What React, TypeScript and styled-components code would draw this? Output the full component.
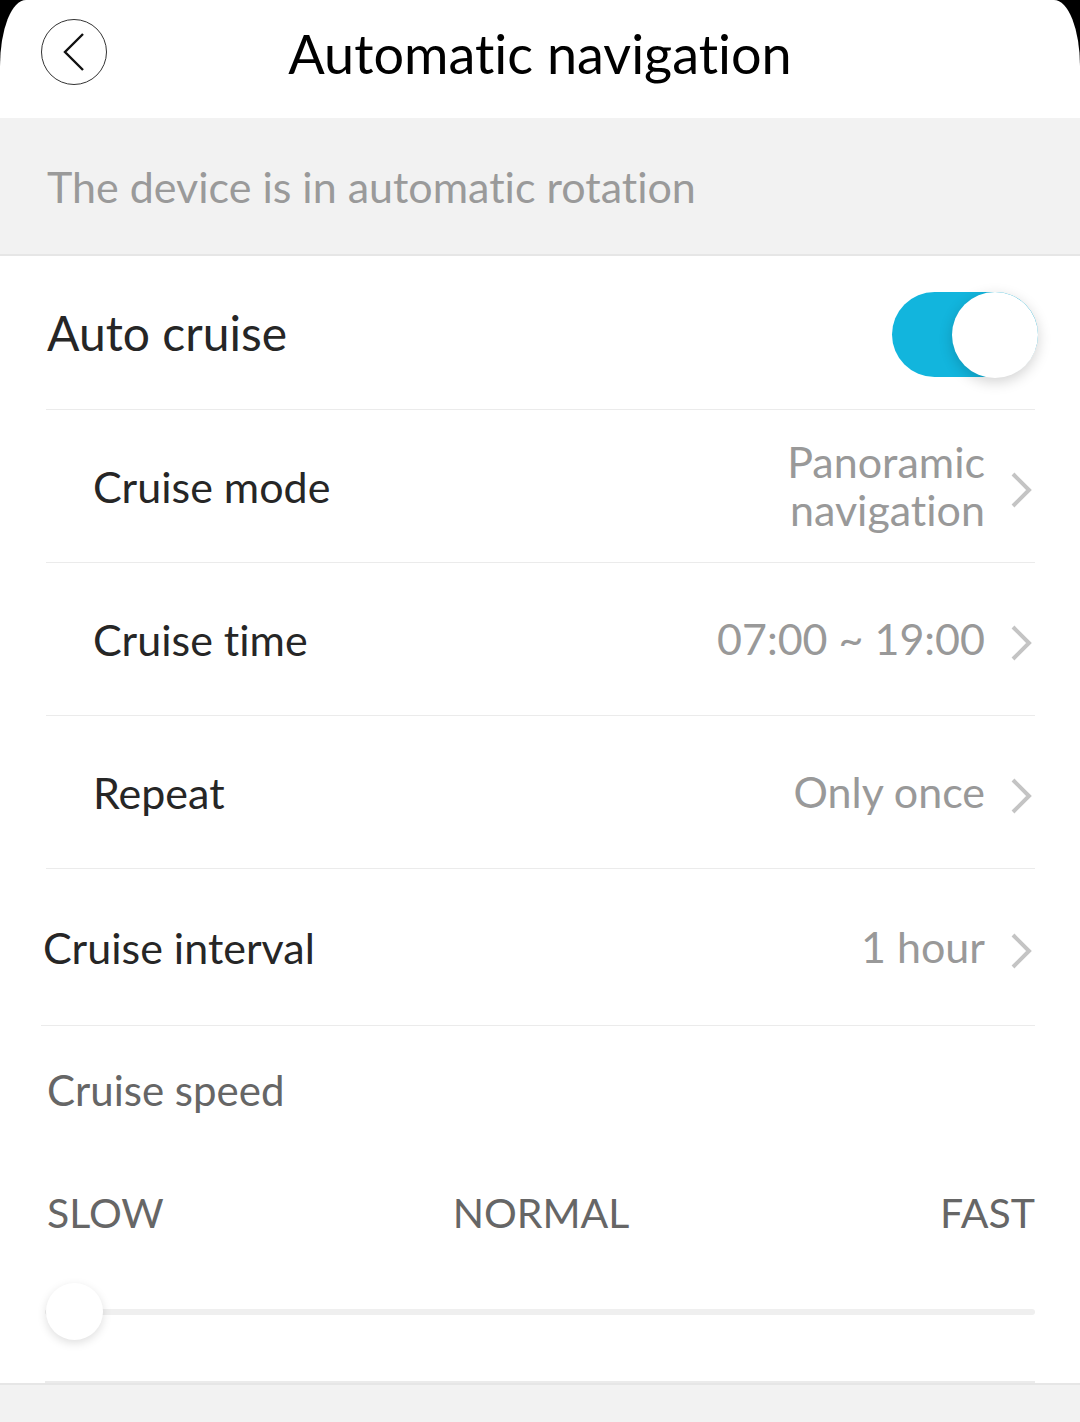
import { createGlobalStyle, styled } from 'styled-components'

const GlobalStyle = createGlobalStyle`
  html, body {
    margin: 0;
    padding: 0;
    background: #000;
  }
  body {
    font-family: Lato, "Noto Sans", sans-serif;
    font-variant-ligatures: none;
  }
`

const Screen = styled.div`
  width: 1080px;
  height: 1422px;
  background: #fff;
  border-top-left-radius: 26px 66px;
  border-top-right-radius: 26px 66px;
  overflow: hidden;
  display: flex;
  flex-direction: column;
`

const Header = styled.header`
  height: 118px;
  flex-shrink: 0;
  position: relative;
  display: flex;
  align-items: center;
  justify-content: center;
`

const BackButton = styled.button`
  position: absolute;
  left: 41px;
  top: 19px;
  width: 66px;
  height: 66px;
  padding: 0;
  border: 1.5px solid #333;
  border-radius: 50%;
  background: transparent;
  display: flex;
  align-items: center;
  justify-content: center;
`

const Title = styled.h1`
  margin: 0 0 12px;
  font-size: 54px;
  font-weight: 400;
  color: #000;
`

const Notice = styled.div`
  height: 138px;
  flex-shrink: 0;
  box-sizing: border-box;
  background: #f2f2f2;
  border-bottom: 2px solid #e6e6e6;
  display: flex;
  align-items: center;
  padding-left: 47px;
  font-size: 43px;
  color: #9a9a9a;
`

const List = styled.div`
  display: flex;
  flex-direction: column;
  padding: 0 45px 0 0;
`

const Row = styled.div<{ $indent: number; $line: number; $height: number }>`
  height: ${(p) => p.$height}px;
  margin-left: ${(p) => p.$line}px;
  padding-left: ${(p) => p.$indent - p.$line}px;
  display: flex;
  align-items: center;
  justify-content: space-between;
  border-bottom: 1.5px solid #ebebeb;
  box-sizing: border-box;
`

const Label = styled.span<{ $big?: boolean }>`
  font-size: ${(p) => (p.$big ? 48 : 43)}px;
  color: #262626;
`

const Value = styled.div`
  display: flex;
  align-items: center;
  gap: 24px;
`

const ValueText = styled.span`
  font-size: 43px;
  line-height: 48px;
  color: #999;
  text-align: right;
`

const ChevronBox = styled.span`
  display: flex;
  margin-top: 8px;
`

const Switch = styled.div`
  width: 146px;
  height: 85px;
  margin-top: 3px;
  margin-right: -3px;
  border-radius: 43px;
  background: #12b5dd;
  position: relative;
`

const Knob = styled.div`
  position: absolute;
  right: 0;
  top: 0;
  width: 86px;
  height: 86px;
  border-radius: 50%;
  background: #fff;
  box-shadow: 0 4px 14px rgba(0, 0, 0, 0.18);
`

const SpeedSection = styled.div`
  margin-left: 45px;
  margin-right: 45px;
  display: flex;
  flex-direction: column;
  border-bottom: 2px solid #ebebeb;
  height: 357px;
  box-sizing: border-box;
`

const SpeedLabel = styled.div`
  height: 128px;
  display: flex;
  align-items: center;
  padding-left: 2px;
  font-size: 42px;
  color: #666;
`

const Levels = styled.div`
  height: 60px;
  margin-top: 28px;
  display: grid;
  grid-template-columns: 1fr auto 1fr;
  align-items: center;
  font-size: 41px;
  color: #666;
  padding-left: 2px;
`

const Level = styled.span<{ $align: 'start' | 'center' | 'end' }>`
  justify-self: ${(p) => p.$align};
`

const Slider = styled.div`
  position: relative;
  margin-top: 67px;
  height: 6px;
  border-radius: 3px;
  background: #efefef;
`

const Thumb = styled.div`
  position: absolute;
  left: 1px;
  top: -26px;
  width: 57px;
  height: 57px;
  border-radius: 50%;
  background: #fff;
  box-shadow: 0 3px 10px rgba(0, 0, 0, 0.13);
`

const Footer = styled.div`
  flex: 1;
  background: #f2f2f2;
  border-top: 2px solid #e6e6e6;
`

const Chevron = () => (
  <ChevronBox>
    <svg width="26" height="40" viewBox="0 0 26 40">
      <path d="M4 4 L20 20 L4 36" fill="none" stroke="#c4c4c4" strokeWidth="4" />
    </svg>
  </ChevronBox>
)

const BackIcon = () => (
  <svg width="30" height="42" viewBox="0 0 30 42">
    <path d="M24 3 L6 21 L24 39" fill="none" stroke="#111" strokeWidth="2.4" />
  </svg>
)

const rows = [
  { label: 'Cruise mode', value: ['Panoramic', 'navigation'] },
  { label: 'Cruise time', value: ['07:00 ~ 19:00'] },
  { label: 'Repeat', value: ['Only once'] },
]

export default function App() {
  return (
    <>
      <GlobalStyle />
      <Screen>
        <Header>
          <BackButton aria-label="Back">
            <BackIcon />
          </BackButton>
          <Title>Automatic navigation</Title>
        </Header>
        <Notice>The device is in automatic rotation</Notice>
        <List>
          <Row $indent={47} $line={46} $height={154}>
            <Label $big>Auto cruise</Label>
            <Switch>
              <Knob />
            </Switch>
          </Row>
          {rows.map((r) => (
            <Row key={r.label} $indent={93} $line={46} $height={153}>
              <Label>{r.label}</Label>
              <Value>
                <ValueText>
                  {r.value.map((v, i) => (
                    <div key={i}>{v}</div>
                  ))}
                </ValueText>
                <Chevron />
              </Value>
            </Row>
          ))}
          <Row $indent={43} $line={41} $height={157}>
            <Label>Cruise interval</Label>
            <Value>
              <ValueText>1 hour</ValueText>
              <Chevron />
            </Value>
          </Row>
        </List>
        <SpeedSection>
          <SpeedLabel>Cruise speed</SpeedLabel>
          <Levels>
            <Level $align="start">SLOW</Level>
            <Level $align="center">NORMAL</Level>
            <Level $align="end">FAST</Level>
          </Levels>
          <Slider>
            <Thumb />
          </Slider>
        </SpeedSection>
        <Footer />
      </Screen>
    </>
  )
}
